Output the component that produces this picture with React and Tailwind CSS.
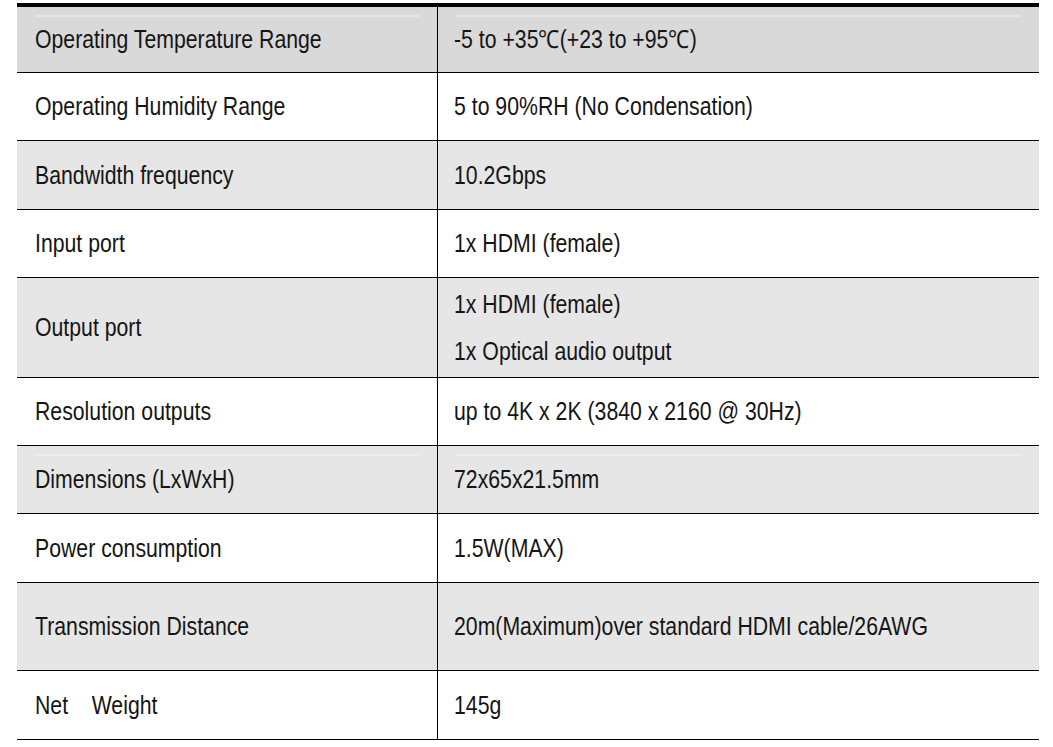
import React from "react";

const rows = [
  { k: "Operating Temperature Range", v: ["-5 to +35℃(+23 to +95℃)"], h: "h-[65px]", bg: "bg-[#d9d9d9]", hl: "bg-[#e6e6e6]" },
  { k: "Operating Humidity Range", v: ["5 to 90%RH (No Condensation)"], h: "h-[67px]", bg: "bg-white" },
  { k: "Bandwidth frequency", v: ["10.2Gbps"], h: "h-[68px]", bg: "bg-[#e6e6e6]" },
  { k: "Input port", v: ["1x HDMI (female)"], h: "h-[67px]", bg: "bg-white" },
  { k: "Output port", v: ["1x HDMI (female)", "1x Optical audio output"], h: "h-[99px]", bg: "bg-[#e6e6e6]" },
  { k: "Resolution outputs", v: ["up to 4K x 2K (3840 x 2160 @ 30Hz)"], h: "h-[67px]", bg: "bg-white" },
  { k: "Dimensions (LxWxH)", v: ["72x65x21.5mm"], h: "h-[67px]", bg: "bg-[#e6e6e6]", hl: "bg-[#ededed]" },
  { k: "Power consumption", v: ["1.5W(MAX)"], h: "h-[68px]", bg: "bg-white" },
  { k: "Transmission Distance", v: ["20m(Maximum)over standard HDMI cable/26AWG"], h: "h-[87px]", bg: "bg-[#e6e6e6]" },
  { k: "Net\u00a0\u00a0\u00a0\u00a0Weight", v: ["145g"], h: "h-[68px]", bg: "bg-white" },
];

function Cell({ children, className, hl }) {
  return (
    <div className={"relative flex flex-col justify-center " + className}>
      {hl && <div className={"absolute top-[8px] left-[18px] right-[18px] h-[2px] " + hl} />}
      {children}
    </div>
  );
}

export default function App() {
  return (
    <div className="w-[1053px] h-[747px] bg-white pt-[3px] pl-[17px] font-['Liberation_Sans',Arial,sans-serif] text-[25px] text-[#151515] leading-none">
      <div className="w-[1022px] border-t-4 border-black">
        {rows.map((r, i) => (
          <div key={i} className={"flex border-b border-black " + r.bg}>
            <Cell className={"w-[421px] pl-[18px] border-r border-black " + r.h} hl={r.hl}>
              <span className="block whitespace-pre origin-left scale-x-[0.85]">{r.k}</span>
            </Cell>
            <Cell className={"flex-1 pl-[16px] gap-[22px] " + r.h} hl={r.hl}>
              {r.v.map((t, j) => (
                <span key={j} className="block whitespace-pre origin-left scale-x-[0.85]">{t}</span>
              ))}
            </Cell>
          </div>
        ))}
      </div>
    </div>
  );
}
